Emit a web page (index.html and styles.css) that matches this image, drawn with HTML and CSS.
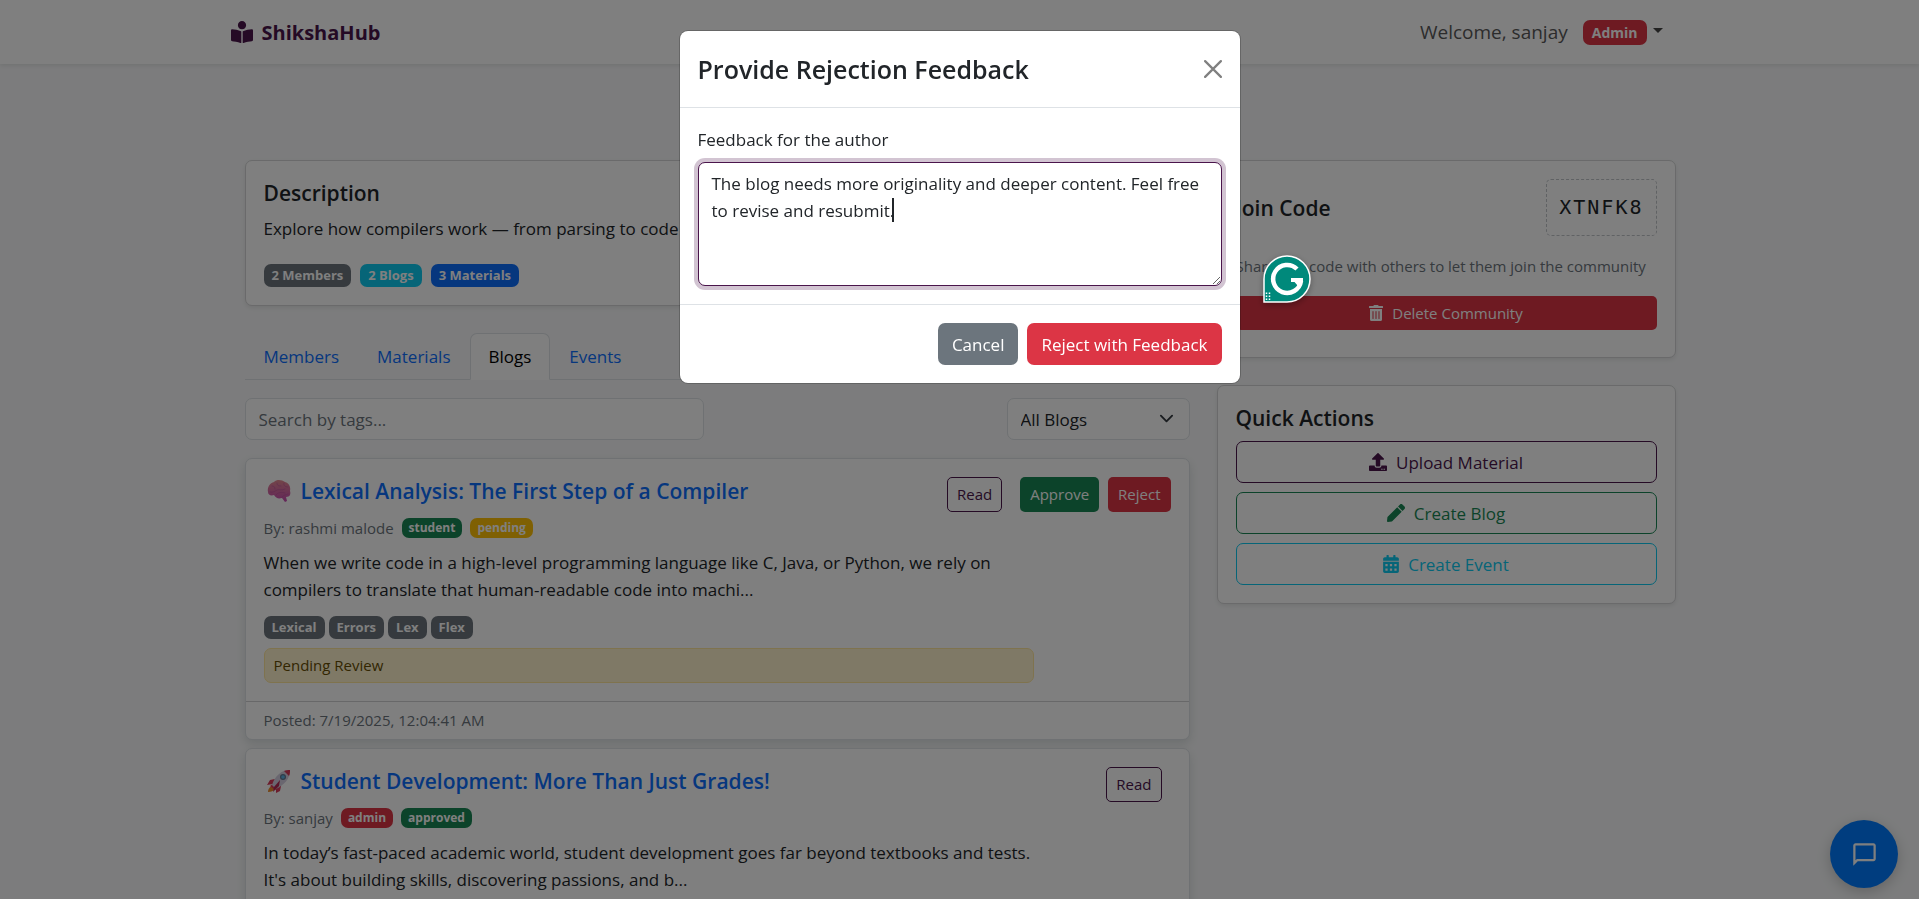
FILE: index.html
```html
<!DOCTYPE html>
<html lang="en">
<head>
<meta charset="utf-8">
<meta name="viewport" content="width=device-width, initial-scale=1">
<title>ShikshaHub</title>
<link rel="stylesheet" href="styles.css">
</head>
<body>
<header class="navbar">
  <div class="navbar-inner">
    <a class="brand" href="#">
      <svg class="brand-icon" viewBox="0 0 512 512" aria-hidden="true"><path d="M352 96c0-53.02-42.98-96-96-96s-96 42.98-96 96 42.98 96 96 96 96-42.98 96-96zM233.59 241.1c-59.33-36.32-155.43-46.3-203.79-49.05C13.55 191.13 0 203.51 0 219.14v222.8c0 14.33 11.59 26.28 26.49 27.05 43.66 2.29 131.99 10.68 193.04 41.43 9.37 4.72 20.48-1.71 20.48-11.87V252.56c-.01-4.67-2.32-8.95-6.42-11.46zm248.61-49.05c-48.35 2.74-144.46 12.73-203.78 49.05-4.1 2.51-6.41 6.96-6.41 11.63v245.79c0 10.19 11.14 16.63 20.54 11.9 61.04-30.72 149.32-39.11 192.97-41.4 14.9-.78 26.49-12.73 26.49-27.06V219.14c-.01-15.63-13.56-28.01-29.81-27.09z"/></svg>
      <span>ShikshaHub</span>
    </a>
    <button class="user-menu" type="button">
      <span class="welcome">Welcome, sanjay</span>
      <span class="badge badge-nav red">Admin</span>
      <span class="caret"></span>
    </button>
  </div>
</header>

<main class="page">
  <div class="col">
    <section class="card description">
      <h2 class="card-title">Description</h2>
      <p class="text">Explore how compilers work — from parsing to code generation.</p>
      <div class="stats">
        <span class="badge gray">2 Members</span>
        <span class="badge cyan">2 Blogs</span>
        <span class="badge blue">3 Materials</span>
      </div>
    </section>

    <nav class="tabs">
      <a class="tab" href="#members">Members</a>
      <a class="tab" href="#materials">Materials</a>
      <a class="tab active" href="#blogs">Blogs</a>
      <a class="tab" href="#events">Events</a>
    </nav>

    <div class="filters">
      <input class="control search" type="text" placeholder="Search by tags..." aria-label="Search by tags">
      <div class="select-wrap">
        <select class="control" aria-label="Filter blogs"><option>All Blogs</option></select>
        <svg class="chevron" viewBox="0 0 16 16" aria-hidden="true"><path d="m2 5 6 6 6-6"/></svg>
      </div>
    </div>

    <article class="card blog">
      <div class="blog-body">
        <div class="blog-main">
          <h3 class="blog-title"><a href="#">
            <svg class="emoji" viewBox="0 0 24 24" aria-hidden="true">
              <defs><linearGradient id="brain" x1="0" y1="0" x2="0" y2="1"><stop offset="0" stop-color="#e58a92"/><stop offset="1" stop-color="#c94bb4"/></linearGradient></defs>
              <path fill="url(#brain)" d="M1 13C0 8 3 4 7 3c3-3 8-2 11 0 4 1 6 5 5 9 1 3 0 6-4 6l1 4-2 1-3-4c-4 1-6 0-8-3-3 1-6 0-6-3z"/>
              <path fill="none" stroke="#b8529c" stroke-width=".6" stroke-linecap="round" d="M5 7c2 0 3 1 3 3m2-6c0 3 2 3 4 3m3-3c-1 3 2 4 4 4M3 13c3 1 5-1 7-2s5 1 8-1m-9 6c2-3 6-3 9-2m-3 4c1-2 4-2 6-3"/>
            </svg>
            <span>Lexical Analysis: The First Step of a Compiler</span></a></h3>
          <div class="meta"><span>By: rashmi malode</span><span class="badge small green">student</span><span class="badge small yellow">pending</span></div>
          <p class="text excerpt">When we write code in a high-level programming language like C, Java, or Python, we rely on compilers to translate that human-readable code into machi...</p>
          <div class="tags"><span class="badge gray">Lexical</span><span class="badge gray">Errors</span><span class="badge gray">Lex</span><span class="badge gray">Flex</span></div>
          <div class="alert">Pending Review</div>
        </div>
        <div class="blog-actions">
          <button class="btn small outline-purple read" type="button">Read</button>
          <button class="btn small solid green" type="button">Approve</button>
          <button class="btn small solid red" type="button">Reject</button>
        </div>
      </div>
      <footer class="blog-footer">Posted: 7/19/2025, 12:04:41 AM</footer>
    </article>

    <article class="card blog">
      <div class="blog-body">
        <div class="blog-main">
          <h3 class="blog-title"><a href="#">
            <svg class="emoji" viewBox="0 0 24 24" aria-hidden="true">
              <path fill="#e8892b" d="M6 17c-3 0-5 3-5 6 3 0 6-1 7-4z"/>
              <path fill="#d83a5a" d="M8 10 3 11l-3 5 6-1zm6 7-1 5-4 2v-7zM6 15l4 4-2 2-5-4z"/>
              <path fill="#d5cfe0" d="M5 16C8 7 14 1 23 1c0 9-6 15-14 19z"/>
              <path fill="#d83a5a" d="M17 2c2-1 4-1 6-1 0 2 0 4-1 6z"/>
              <path fill="#b52a52" d="m13 11-6 7-1 5 6-6z"/>
              <circle cx="16" cy="8" r="3" fill="#5f7891"/><circle cx="16" cy="8" r="1.8" fill="#5cb3e6"/>
            </svg>
            <span>Student Development: More Than Just Grades!</span></a></h3>
          <div class="meta"><span>By: sanjay</span><span class="badge small red">admin</span><span class="badge small green">approved</span></div>
          <p class="text excerpt">In today’s fast-paced academic world, student development goes far beyond textbooks and tests. It's about building skills, discovering passions, and b...</p>
        </div>
        <div class="blog-actions">
          <button class="btn small outline-purple read" type="button">Read</button>
        </div>
      </div>
    </article>
  </div>

  <aside class="col">
    <section class="card join">
      <div class="join-head">
        <h2 class="card-title">Join Code</h2>
        <code class="join-code">XTNFK8</code>
      </div>
      <p class="hint">Share this code with others to let them join the community</p>
      <button class="btn wide delete red" type="button">
        <svg class="icon-small" viewBox="0 0 448 512" aria-hidden="true"><path d="M32 464a48 48 0 0 0 48 48h288a48 48 0 0 0 48-48V128H32zm272-256a16 16 0 0 1 32 0v224a16 16 0 0 1-32 0zm-96 0a16 16 0 0 1 32 0v224a16 16 0 0 1-32 0zm-96 0a16 16 0 0 1 32 0v224a16 16 0 0 1-32 0zM432 32H312l-9.4-18.7A24 24 0 0 0 281.1 0H166.8a23.72 23.72 0 0 0-21.4 13.3L136 32H16A16 16 0 0 0 0 48v32a16 16 0 0 0 16 16h416a16 16 0 0 0 16-16V48a16 16 0 0 0-16-16z"/></svg>
        Delete Community</button>
    </section>

    <section class="card quick">
      <h2 class="card-title">Quick Actions</h2>
      <button class="btn wide outline-purple" type="button">
        <svg class="icon" viewBox="0 0 512 512" aria-hidden="true"><path d="M296 384h-80c-13.3 0-24-10.7-24-24V192h-87.7c-17.8 0-26.7-21.5-14.1-34.1L242.3 5.7c7.5-7.5 19.8-7.5 27.3 0l152.2 152.2c12.6 12.6 3.7 34.1-14.1 34.1H320v168c0 13.3-10.7 24-24 24zm216-8v112c0 13.3-10.7 24-24 24H24c-13.3 0-24-10.7-24-24V376c0-13.3 10.7-24 24-24h136v8c0 30.9 25.1 56 56 56h80c30.9 0 56-25.1 56-56v-8h136c13.3 0 24 10.7 24 24zm-124 88c0-11-9-20-20-20s-20 9-20 20 9 20 20 20 20-9 20-20zm64 0c0-11-9-20-20-20s-20 9-20 20 9 20 20 20 20-9 20-20z"/></svg>
        Upload Material</button>
      <button class="btn wide outline-green" type="button">
        <svg class="icon" viewBox="0 0 512 512" aria-hidden="true"><path d="M290.74 93.24l128.02 128.02-277.99 277.99-114.14 12.6C11.35 513.54-1.56 500.62.14 485.34l12.7-114.22 277.9-277.88zm207.2-19.06l-60.11-60.11c-18.75-18.75-49.16-18.75-67.91 0l-56.55 56.55 128.02 128.02 56.55-56.55c18.75-18.76 18.75-49.16 0-67.91z"/></svg>
        Create Blog</button>
      <button class="btn wide outline-cyan" type="button">
        <svg class="icon calendar" viewBox="0 0 448 512" aria-hidden="true"><path fill-rule="evenodd" d="M0 464c0 26.5 21.5 48 48 48h352c26.5 0 48-21.5 48-48V192H0zM64 256h64v64H64zm128 0h64v64h-64zm128 0h64v64h-64zM64 384h64v64H64zm128 0h64v64h-64zm128 0h64v64h-64zM400 64h-48V16c0-8.8-7.2-16-16-16h-32c-8.8 0-16 7.2-16 16v48H160V16c0-8.8-7.2-16-16-16h-32c-8.8 0-16 7.2-16 16v48H48C21.5 64 0 85.5 0 112v48h448v-48c0-26.5-21.5-48-48-48z"/></svg>
        Create Event</button>
    </section>
  </aside>
</main>

<button class="chat" type="button" aria-label="Open chat">
  <svg viewBox="0 0 24 24" aria-hidden="true"><path d="M20 2H4c-1.1 0-2 .9-2 2v18l4-4h14c1.1 0 2-.9 2-2V4c0-1.100-.9-2-2-2zm0 14H5.200L4 17.200V4h16z"/></svg>
</button>

<div class="backdrop">
  <div class="modal" role="dialog" aria-modal="true" aria-labelledby="modal-title">
    <div class="modal-header">
      <h1 class="modal-title" id="modal-title">Provide Rejection Feedback</h1>
      <button class="close" type="button" aria-label="Close"><svg viewBox="0 0 16 16" aria-hidden="true"><path d="m1 1 14 14M15 1 1 15"/></svg></button>
    </div>
    <div class="modal-body">
      <label class="label" for="feedback">Feedback for the author</label>
      <div class="feedback-wrap">
        <textarea class="feedback" id="feedback">The blog needs more originality and deeper content. Feel free to revise and resubmit.</textarea>
        <span class="text-caret"></span>
      </div>
    </div>
    <div class="modal-footer">
      <button class="btn solid gray" type="button">Cancel</button>
      <button class="btn solid red" type="button">Reject with Feedback</button>
    </div>
  </div>
</div>

<svg class="assistant" viewBox="0 0 48 48" aria-hidden="true">
  <path fill="#00897b" stroke="#fff" stroke-width="1.500" d="M1 47V24a23 23 0 1 1 23 23z"/>
  <path fill="none" stroke="#fff" stroke-width="4.500" d="M34 14A14 14 0 1 0 38 26"/>
  <path fill="none" stroke="#fff" stroke-width="4" d="M28 25h12"/>
  <path fill="#fff" d="M28 23h12l-5 8z"/>
  <path fill="none" stroke="#fff" stroke-width="1.500" stroke-dasharray="1.500 1.500" d="M3.500 37.500v9M6.500 37.500v9"/>
</svg>
</body>
</html>
```
FILE: styles.css
```css
* { box-sizing: border-box; }

body {
  margin: 0;
  height: 100vh;
  overflow: hidden;
  background: #f8f9fa;
  color: #212529;
  font-family: "Open Sans", "Noto Sans", sans-serif;
  font-size: 17px;
  line-height: 27px;
}

h1, h2, h3, p { margin: 0; }
a { color: #0d6efd; text-decoration: none; }
button, input, select, textarea { font: inherit; color: inherit; }

.navbar {
  background: #fff;
  box-shadow: 0 2px 4px rgba(0, 0, 0, .08);
}
.navbar-inner {
  display: flex;
  align-items: center;
  justify-content: space-between;
  max-width: 1458px;
  height: 64px;
  margin: 0 auto;
  padding-right: 26px;
}
.brand {
  display: flex;
  align-items: center;
  gap: 9px;
  color: #4a154b;
  font-size: 20px;
  font-weight: 700;
}
.brand-icon { width: 22px; height: 22px; fill: currentColor; }
.user-menu {
  display: flex;
  align-items: center;
  padding: 0;
  border: 0;
  background: none;
  color: #595959;
}
.welcome { margin-right: 15px; font-size: 19px; font-weight: 500; }
.caret {
  margin: 0 0 4px 6px;
  border: 5px solid transparent;
  border-top-color: #444;
  border-bottom: 0;
}

.page {
  display: grid;
  grid-template-columns: 2fr 1fr;
  max-width: 1458px;
  margin: 0 auto;
  padding-top: 96px;
}
.col { min-width: 0; padding: 0 13px 0 14px; }

.card {
  border: 1px solid #d4d5d6;
  border-radius: 7px;
  background: #fff;
  box-shadow: 0 2px 4px rgba(0, 0, 0, .08);
}
.card-title { font-size: 21px; font-weight: 600; line-height: 28px; }

.description { padding: 18px; }
.description .text { margin: 8px 0 22px; }
.stats { display: flex; gap: 9px; }

.badge {
  display: inline-block;
  padding: 0 8px;
  border-radius: 7px;
  color: #fff;
  font-size: 13px;
  font-weight: 700;
  line-height: 23px;
}
.badge.small { padding: 0 7px; font-size: 12px; line-height: 20px; }
.badge-nav { padding: 0 9px; font-size: 14px; line-height: 25px; }
.gray { background: #6c757d; }
.cyan { background: #0dcaf0; }
.blue { background: #0d6efd; }
.green { background: #198754; }
.red { background: #dc3545; }
.yellow { background: #ffc107; }

.tabs {
  display: flex;
  margin-top: 27px;
  border-bottom: 1px solid #dee2e6;
}
.tab {
  margin-bottom: -1px;
  padding: 9px 18px;
  border: 1px solid transparent;
  border-radius: 7px 7px 0 0;
}
.tab.active {
  border-color: #dee2e6 #dee2e6 #fff;
  background: #fff;
  color: #000;
}

.filters {
  display: flex;
  justify-content: space-between;
  margin: 18px 0;
}
.control {
  height: 42px;
  padding: 0 13px;
  border: 1px solid #dee2e6;
  border-radius: 7px;
  background: #fff;
  appearance: none;
}
.control::placeholder { color: #6c757d; opacity: 1; }
.search { flex: 0 0 459px; }
.select-wrap { position: relative; flex: 0 0 183px; }
.select-wrap .control { width: 100%; }
.chevron {
  position: absolute;
  top: 13px;
  right: 16px;
  width: 15px;
  height: 15px;
  fill: none;
  stroke: #343a40;
  stroke-width: 2;
  stroke-linecap: round;
  stroke-linejoin: round;
  pointer-events: none;
}

.blog {
  margin-bottom: 8px;
  border-color: #dee2e6;
  box-shadow: 0 4px 10px rgba(0, 40, 30, .12);
}
.blog-body {
  display: flex;
  align-items: flex-start;
  justify-content: space-between;
  padding: 18px;
}
.blog-main { flex: 0 0 85%; }
.blog-title { font-size: 21px; font-weight: 600; line-height: 28px; }
.blog-title a { display: flex; align-items: center; gap: 10px; padding-left: 3px; }
.emoji { flex: none; width: 24px; height: 24px; }
.meta {
  display: flex;
  align-items: center;
  gap: 8px;
  margin: 11px 0 9px;
  color: #6c757d;
  font-size: 15px;
  line-height: 24px;
}
.tags { display: flex; gap: 4px; margin: 13px 0 9px; }
.alert {
  padding: 4px 9px;
  border: 1px solid #ffe69c;
  border-radius: 7px;
  background: #fff3cd;
  color: #664d03;
  font-size: 15px;
  line-height: 25px;
}
.blog-actions { display: flex; flex: none; gap: 9px; margin-left: -120px; }
.read { margin-right: 9px; }
.blog-footer {
  padding: 6px 18px;
  border-top: 1px solid #d0d1d2;
  color: #6c757d;
  font-size: 15px;
  line-height: 25px;
}

.btn {
  display: inline-flex;
  align-items: center;
  justify-content: center;
  gap: 9px;
  height: 42px;
  padding: 0 13px;
  border: 1px solid transparent;
  border-radius: 7px;
  background-color: transparent;
}
.btn.small { height: 35px; padding: 0 9px; border-radius: 5px; font-size: 15px; }
.btn.wide { display: flex; width: 100%; }
.btn.solid, .btn.delete { color: #fff; }
.btn.gray { background-color: #6c757d; }
.btn.green { background-color: #198754; }
.btn.red { background-color: #dc3545; }
.outline-purple { border-color: #4a154b; color: #4a154b; }
.outline-green { border-color: #198754; color: #198754; }
.outline-cyan { border-color: #0dcaf0; color: #0dcaf0; }
.icon { width: 18px; height: 18px; fill: currentColor; }
.icon.calendar { width: 16px; }
.icon-small { width: 14px; height: 16px; fill: currentColor; }

.join { margin-bottom: 27px; padding: 18px 18px 27px; }
.join-head { display: flex; align-items: center; justify-content: space-between; }
.join-code {
  padding: 14px 12px;
  border: 1px dashed #c0c4c8;
  border-radius: 5px;
  font-family: "DejaVu Sans Mono", monospace;
  font-size: 20px;
  letter-spacing: 2px;
}
.hint { margin: 18px 0; color: #6c757d; font-size: 15px; line-height: 24px; }
.btn.delete { height: 34px; border-radius: 5px; font-size: 15px; }
.quick { display: grid; gap: 9px; padding: 18px; }

.chat {
  position: fixed;
  right: 21px;
  bottom: 11px;
  display: grid;
  place-items: center;
  width: 68px;
  height: 68px;
  padding: 0;
  border: 0;
  border-radius: 50%;
  background: #007bff;
  box-shadow: 0 4px 14px rgba(0, 0, 0, .2);
}
.chat svg { width: 27px; height: 27px; fill: #fff; }

.backdrop {
  position: fixed;
  inset: 0;
  padding: 31px 20px;
  background: rgba(0, 0, 0, .5);
}
.modal {
  max-width: 560px;
  margin: 0 auto;
  border-radius: 8px;
  background: #fff;
  box-shadow: 0 0 0 1px rgba(0, 0, 0, .2);
}
.modal-header {
  display: flex;
  align-items: center;
  justify-content: space-between;
  padding: 18px;
  border-bottom: 1px solid #dee2e6;
}
.modal-title { font-size: 25px; font-weight: 600; line-height: 40px; }
.close { display: grid; padding: 0; border: 0; background: none; }
.close svg { width: 18px; height: 18px; fill: none; stroke: #808080; stroke-width: 2; stroke-linecap: round; }
.modal-body { padding: 18px; }
.label { display: block; margin-bottom: 9px; }
.feedback-wrap { position: relative; display: grid; }
.feedback {
  height: 124px;
  padding: 7px 13px;
  border: 1px solid #4a154b;
  border-radius: 7px;
  outline: 0;
  box-shadow: 0 0 0 4px rgba(74, 21, 75, .25);
  resize: vertical;
}
.text-caret {
  position: absolute;
  top: 36px;
  left: 194px;
  width: 2px;
  height: 24px;
  background: #212529;
}
.modal-footer {
  display: flex;
  justify-content: flex-end;
  gap: 9px;
  padding: 18px;
  border-top: 1px solid #dee2e6;
}

.assistant {
  position: fixed;
  top: 255px;
  left: 1263px;
  width: 48px;
  height: 48px;
  filter: drop-shadow(0 2px 3px rgba(0, 0, 0, .3));
}
```
